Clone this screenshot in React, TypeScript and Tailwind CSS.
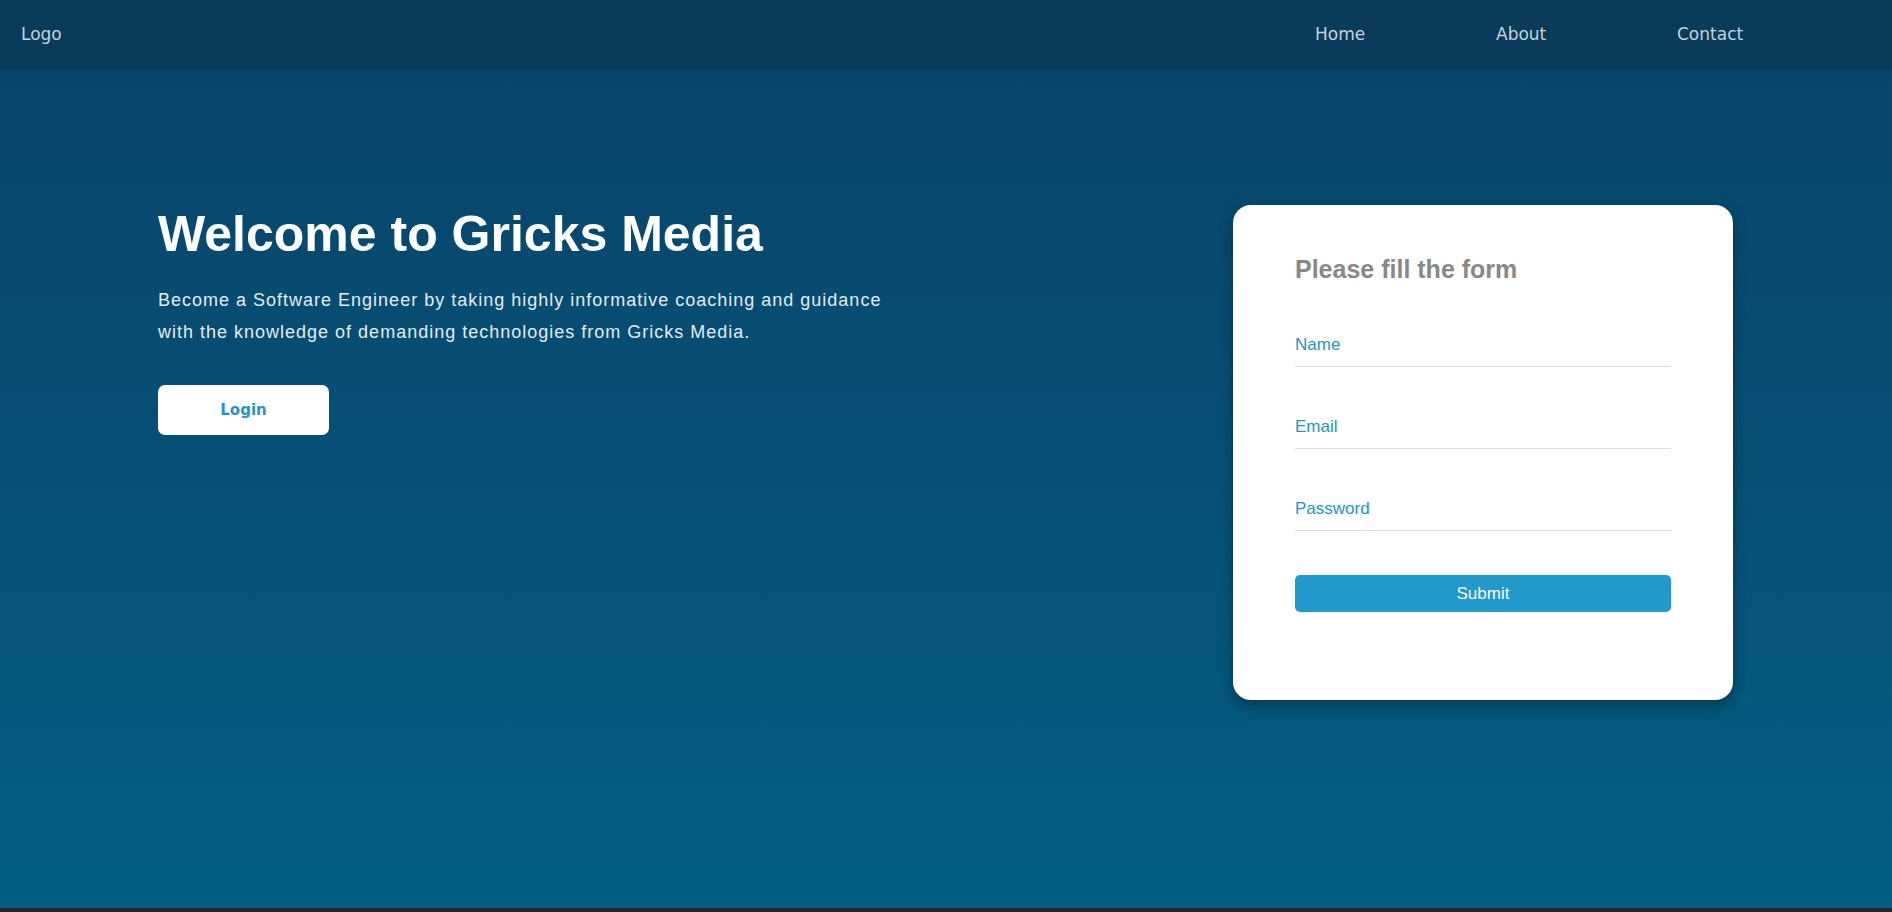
import React from 'react';

const navLinks = ['Home', 'About', 'Contact'];

function Field({ placeholder, type }: { placeholder: string; type: string }) {
  return (
    <input
      type={type}
      placeholder={placeholder}
      className="block w-full border-b border-[#dedede] bg-transparent pb-[11px] text-[17px] leading-[20px] text-[#2196c9] outline-none placeholder:text-[#2196c9]"
    />
  );
}

export default function App() {
  return (
    <div className="min-h-screen bg-[#262626] font-['Liberation_Sans',Arial,sans-serif]">
      <nav className="flex h-[70px] items-center justify-between bg-[#0a3b5a] pl-[21px] pr-[34px] font-['DejaVu_Sans',sans-serif] text-[17px] text-[#c3d3de]">
        <div>Logo</div>
        <ul className="flex">
          {navLinks.map(link => (
            <li key={link} className="w-[181px]">
              <a href="#">{link}</a>
            </li>
          ))}
        </ul>
      </nav>

      <section className="flex h-[838px] items-start justify-between bg-gradient-to-b from-[#08456a] to-[#045e83] pl-[158px] pr-[159px]">
        <div className="pt-[135px]">
          <h1 className="text-[50px] font-bold leading-[58px] text-white">Welcome to Gricks Media</h1>
          <p className="mt-[21px] max-w-[750px] text-[18px] leading-[32px] tracking-[1px] text-[#e4ebf0]">
            Become a Software Engineer by taking highly informative coaching and guidance with the knowledge of
            demanding technologies from Gricks Media.
          </p>
          <button className="mt-[37px] h-[50px] w-[171px] rounded-[7px] bg-white font-['DejaVu_Sans',sans-serif] text-[15px] font-bold text-[#2196c9]">
            Login
          </button>
        </div>

        <div className="mt-[135px] w-[500px] rounded-[18px] bg-white px-[62px] pb-[88px] pt-[50px] shadow-[0_6px_14px_rgba(0,0,0,0.35)]">
          <h2 className="text-[25px] font-bold leading-[29px] text-[#888888]">Please fill the form</h2>
          <form className="mt-[51px] flex flex-col gap-[50px]" onSubmit={e => e.preventDefault()}>
            <Field placeholder="Name" type="text" />
            <Field placeholder="Email" type="email" />
            <Field placeholder="Password" type="password" />
          </form>
          <button className="mt-[44px] h-[37px] w-full rounded-[5px] bg-[#2199cb] text-[17px] text-white">
            Submit
          </button>
        </div>
      </section>
    </div>
  );
}
